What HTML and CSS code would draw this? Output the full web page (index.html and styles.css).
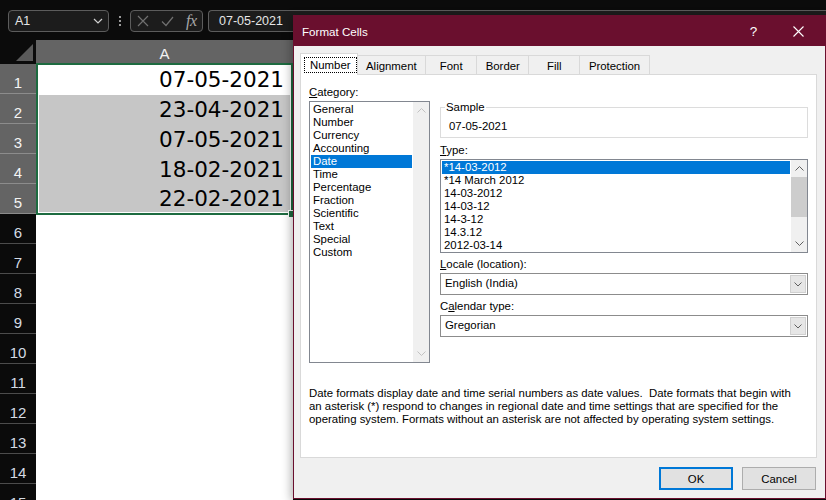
FILE: index.html
```html
<!DOCTYPE html>
<html lang="en">
<head>
  <meta charset="UTF-8">
  <title>Format Cells</title>
  <link rel="stylesheet" href="styles.css">
</head>
<body>

  <header class="formula-bar">
    <div class="name-box">
      <span>A1</span>
      <svg class="chev" width="10" height="6" viewBox="0 0 10 6"><path d="M1 1l4 4 4-4" fill="none" stroke="#d0d0d0" stroke-width="1.2"/></svg>
    </div>
    <div class="grip"><i></i><i></i><i></i></div>
    <div class="fx-box">
      <svg width="12" height="12" viewBox="0 0 12 12"><path d="M1 1l10 10M11 1L1 11" stroke="#707070" stroke-width="1.2"/></svg>
      <svg width="13" height="11" viewBox="0 0 13 11"><path d="M1 5.5l4 4L12 1" fill="none" stroke="#707070" stroke-width="1.2"/></svg>
      <span class="fx">fx</span>
    </div>
    <div class="formula-input">07-05-2021</div>
  </header>

  <main class="sheet">
    <div class="row-heads">
      <div class="corner">
        <svg width="36" height="24" viewBox="0 0 36 24"><polygon points="16,21 33,21 33,4" fill="#5a5a5a"/></svg>
      </div>
      <div class="rh sel">1</div>
      <div class="rh sel">2</div>
      <div class="rh sel">3</div>
      <div class="rh sel">4</div>
      <div class="rh sel">5</div>
      <div class="rh">6</div>
      <div class="rh">7</div>
      <div class="rh">8</div>
      <div class="rh">9</div>
      <div class="rh">10</div>
      <div class="rh">11</div>
      <div class="rh">12</div>
      <div class="rh">13</div>
      <div class="rh">14</div>
      <div class="rh">15</div>
    </div>
    <div class="col-a">
      <div class="col-head">A</div>
      <div class="selection">
        <div class="cell">07-05-2021</div>
        <div class="cell hl">23-04-2021</div>
        <div class="cell hl">07-05-2021</div>
        <div class="cell hl">18-02-2021</div>
        <div class="cell hl">22-02-2021</div>
        <span class="fill-handle"></span>
      </div>
    </div>
  </main>

  <section class="dialog">
    <div class="title-bar">
      <span class="title">Format Cells</span>
      <span class="tb-btn">?</span>
      <span class="tb-btn close">
        <svg width="11" height="11" viewBox="0 0 11 11"><path d="M0.5 0.5l10 10M10.5 0.5l-10 10" stroke="#fff" stroke-width="1.1"/></svg>
      </span>
    </div>

    <div class="dialog-body">
      <nav class="tabs">
        <span class="tab active"><span class="focus">Number</span></span>
        <span class="tab">Alignment</span>
        <span class="tab">Font</span>
        <span class="tab">Border</span>
        <span class="tab">Fill</span>
        <span class="tab">Protection</span>
      </nav>

      <div class="tab-panel">
        <div class="panel-cols">
          <div class="cat-col">
            <div class="label"><u>C</u>ategory:</div>
            <div class="listbox cat-list">
              <ul class="items">
                <li>General</li>
                <li>Number</li>
                <li>Currency</li>
                <li>Accounting</li>
                <li class="selected">Date</li>
                <li>Time</li>
                <li>Percentage</li>
                <li>Fraction</li>
                <li>Scientific</li>
                <li>Text</li>
                <li>Special</li>
                <li>Custom</li>
              </ul>
              <div class="vscroll disabled">
                <span class="arrow"><svg width="9" height="5" viewBox="0 0 9 5"><path d="M0.5 4.5l4-4 4 4" fill="none" stroke="currentColor"/></svg></span>
                <span class="arrow"><svg width="9" height="5" viewBox="0 0 9 5"><path d="M0.5 0.5l4 4 4-4" fill="none" stroke="currentColor"/></svg></span>
              </div>
            </div>
          </div>

          <div class="opt-col">
            <fieldset class="sample">
              <legend>Sample</legend>
              <div>07-05-2021</div>
            </fieldset>

            <div class="label"><u>T</u>ype:</div>
            <div class="listbox type-list">
              <ul class="items">
                <li class="selected">*14-03-2012</li>
                <li>*14 March 2012</li>
                <li>14-03-2012</li>
                <li>14-03-12</li>
                <li>14-3-12</li>
                <li>14.3.12</li>
                <li>2012-03-14</li>
              </ul>
              <div class="vscroll">
                <span class="arrow"><svg width="9" height="5" viewBox="0 0 9 5"><path d="M0.5 4.5l4-4 4 4" fill="none" stroke="currentColor"/></svg></span>
                <span class="thumb"></span>
                <span class="spacer"></span>
                <span class="arrow"><svg width="9" height="5" viewBox="0 0 9 5"><path d="M0.5 0.5l4 4 4-4" fill="none" stroke="currentColor"/></svg></span>
              </div>
            </div>

            <div class="label"><u>L</u>ocale (location):</div>
            <div class="combo">
              <span>English (India)</span>
              <span class="drop"><svg width="8" height="5" viewBox="0 0 8 5"><path d="M0.5 0.5l3.5 3.5 3.5-3.5" fill="none" stroke="#606060"/></svg></span>
            </div>

            <div class="label">C<u>a</u>lendar type:</div>
            <div class="combo">
              <span>Gregorian</span>
              <span class="drop"><svg width="8" height="5" viewBox="0 0 8 5"><path d="M0.5 0.5l3.5 3.5 3.5-3.5" fill="none" stroke="#606060"/></svg></span>
            </div>
          </div>
        </div>

        <p class="note">
          Date formats display date and time serial numbers as date values.&nbsp; Date formats that begin with<br>
          an asterisk (*) respond to changes in regional date and time settings that are specified for the<br>
          operating system. Formats without an asterisk are not affected by operating system settings.
        </p>
      </div>

      <div class="buttons">
        <button class="btn default">OK</button>
        <button class="btn">Cancel</button>
      </div>
    </div>
  </section>

</body>
</html>
```

FILE: styles.css
```css
:root {
  --xl-bg: #0b0b0b;
  --xl-box: #1c1c1c;
  --xl-box-border: #5c5c5c;
  --xl-head: #646464;
  --xl-green: #1d6b40;
  --dlg-title: #6a0f2e;
  --dlg-bg: #f0f0f0;
  --dlg-line: #d9d9d9;
  --list-border: #828790;
  --select-blue: #0078d7;
  --font-ui: "Liberation Sans", Arial, sans-serif;
}

* {
  box-sizing: border-box;
  margin: 0;
  padding: 0;
}

body {
  position: relative;
  width: 826px;
  height: 500px;
  overflow: hidden;
  background: var(--xl-bg);
  font-family: var(--font-ui);
}

/* ---------- formula bar ---------- */

.formula-bar {
  display: flex;
  height: 40px;
  padding: 10px 0 8px 8px;
}

.name-box,
.fx-box,
.formula-input {
  height: 22px;
  border: 1px solid var(--xl-box-border);
  border-radius: 4px;
  background: var(--xl-box);
  color: #e6e6e6;
  font-size: 12.5px;
}

.name-box {
  width: 101px;
  display: flex;
  align-items: center;
  justify-content: space-between;
  padding: 0 5px 0 6px;
}

.grip {
  display: flex;
  flex-direction: column;
  justify-content: center;
  gap: 2px;
  width: 2px;
  margin: 0 9px 0 10px;
}

.grip i {
  display: block;
  width: 2px;
  height: 2px;
  background: #9a9a9a;
}

.fx-box {
  width: 73px;
  display: flex;
  align-items: center;
  gap: 12px;
  padding-left: 6px;
}

.fx {
  font-family: "Liberation Serif", serif;
  font-style: italic;
  font-size: 16px;
  color: #a8a8a8;
  letter-spacing: -0.5px;
}

.formula-input {
  flex: 1;
  margin-left: 5px;
  padding-left: 10px;
  line-height: 20px;
  border-right: none;
  border-radius: 4px 0 0 4px;
}

/* ---------- sheet ---------- */

.sheet {
  display: flex;
}

.row-heads {
  width: 36px;
}

.corner {
  height: 24px;
}

.corner svg {
  display: block;
}

.rh {
  height: 30px;
  padding-top: 8px;
  line-height: 21px;
  border-bottom: 1px solid #4c4c4c;
  text-align: center;
  font-size: 15px;
  color: #d4dbe4;
  overflow: hidden;
}

.rh.sel {
  background: var(--xl-head);
  border-bottom-color: #8c8c8c;
  color: #f4f4f4;
}

.col-a {
  width: 257px;
  height: 460px;
  background: #fff;
}

.col-head {
  height: 23px;
  padding-top: 2px;
  line-height: 23px;
  background: var(--xl-head);
  color: #f2f2f2;
  font-size: 15px;
  text-align: center;
  overflow: hidden;
}

.selection {
  position: relative;
  height: 152px;
  border: 2px solid var(--xl-green);
  padding: 0 1px 1px;
  background: #fff;
}

.cell {
  height: 30px;
  padding-right: 6px;
  line-height: 30px;
  text-align: right;
  font-family: "DejaVu Sans", sans-serif;
  font-size: 21.5px;
  color: #000;
  overflow: hidden;
}

.cell:last-of-type {
  height: 27px;
  line-height: 28px;
}

.cell.hl {
  background: #c6c6c6;
}

.fill-handle {
  position: absolute;
  right: -4px;
  bottom: -4px;
  width: 6px;
  height: 6px;
  background: var(--xl-green);
  outline: 1px solid #fff;
}

/* ---------- dialog ---------- */

.dialog {
  position: absolute;
  left: 293px;
  top: 15px;
  width: 533px;
  height: 484px;
  background: var(--dlg-bg);
  border: 1px solid var(--dlg-title);
  box-shadow: -2px 2px 9px rgba(0, 0, 0, 0.3);
  font-size: 11.4px;
  color: #000;
}

.title-bar {
  display: flex;
  align-items: center;
  height: 30px;
  padding-left: 8px;
  background: var(--dlg-title);
  color: #fff;
  font-size: 11.6px;
}

.title {
  flex: 1;
}

.tb-btn {
  width: 45px;
  height: 30px;
  display: flex;
  align-items: center;
  justify-content: center;
  font-size: 13.5px;
}

.tb-btn.close {
  margin-right: 4px;
}

.dialog-body {
  padding: 7px 8px 0 6px;
}

.tabs {
  display: flex;
  align-items: flex-end;
  height: 22px;
  margin-bottom: -1px;
}

.tab {
  position: relative;
  height: 19px;
  min-width: 52px;
  margin-bottom: 1px;
  margin-left: -1px;
  padding: 2px 8.5px 0;
  line-height: 16px;
  text-align: center;
  border: 1px solid var(--dlg-line);
  border-bottom: none;
  background: var(--dlg-bg);
}

.tab.active {
  z-index: 1;
  height: 22px;
  margin: 0;
  padding: 3px 0 0 3px;
  background: #fff;
  line-height: 14px;
}

.focus {
  display: inline-block;
  padding: 0 5px;
  border: 1px dotted #000;
}

.tab-panel {
  height: 384px;
  padding: 10px 8px 0 8px;
  background: #fff;
  border: 1px solid var(--dlg-line);
}

.panel-cols {
  display: grid;
  grid-template-columns: 121px 368px;
  gap: 10px;
}

.label {
  height: 14px;
  line-height: 14px;
  margin-bottom: 2px;
}

.listbox {
  display: flex;
  border: 1px solid var(--list-border);
  background: #fff;
}

.cat-list {
  height: 262px;
}

.type-list {
  height: 94px;
}

.items {
  flex: 1;
  list-style: none;
  padding: 1px 0 0 1px;
  line-height: 13px;
  white-space: nowrap;
  overflow: hidden;
}

.items li {
  padding-left: 2px;
  height: 13px;
}

.items li.selected {
  background: var(--select-blue);
  color: #fff;
}

.vscroll {
  display: flex;
  flex-direction: column;
  width: 16px;
  margin-left: 1px;
  background: var(--dlg-bg);
  color: #606060;
}

.vscroll.disabled {
  justify-content: space-between;
  color: #c2c2c2;
}

.arrow {
  display: flex;
  align-items: center;
  justify-content: center;
  height: 17px;
}

.arrow svg {
  display: block;
}

.thumb {
  height: 40px;
  background: #cdcdcd;
}

.spacer {
  flex: 1;
}

.opt-col {
  padding-top: 15px;
}

.sample {
  height: 38px;
  padding: 0 8px;
  border: 1px solid #dcdcdc;
  margin-bottom: 5px;
}

.sample legend {
  margin-left: -4px;
  padding: 0 1px;
  line-height: 14px;
}

.sample div {
  padding-top: 5px;
  line-height: 14px;
}

.type-list + .label,
.combo + .label {
  margin-top: 4px;
}

.combo {
  display: flex;
  align-items: stretch;
  height: 22px;
  border: 1px solid #8c8c8c;
  background: #fff;
}

.combo span:first-child {
  flex: 1;
  padding-left: 4px;
  line-height: 19px;
}

.drop {
  display: flex;
  align-items: center;
  justify-content: center;
  width: 16px;
  margin: 1px;
  background: #e6e6e6;
  border: 1px solid #d0d0d0;
}

.note {
  margin-top: 24px;
  line-height: 13px;
  white-space: nowrap;
}

.buttons {
  display: flex;
  justify-content: flex-end;
  gap: 9px;
  padding: 9px 1px 0 0;
}

.btn {
  width: 74px;
  height: 23px;
  background: #e1e1e1;
  border: 1px solid #adadad;
  font-family: var(--font-ui);
  font-size: 11.4px;
  color: #000;
}

.btn.default {
  border: 2px solid var(--select-blue);
}
```
